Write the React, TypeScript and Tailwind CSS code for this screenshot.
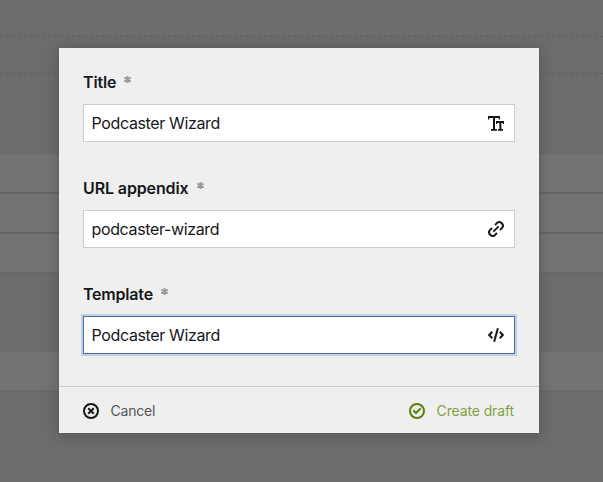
import type { ReactNode } from "react";

function TitleIcon() {
  return (
    <svg width="16" height="16" viewBox="0 0 16 16" fill="currentColor">
      <path d="M0 1H12V4.5H10.7V3H7V14H9V15.7H3V14H5V3H1.3V4.5H0Z" />
      <path d="M8 6H16V9H14.8V8H13.4V14H15V15.7H10V14H11.4V8H9.2V9H8Z" />
    </svg>
  );
}

function LinkIcon() {
  return (
    <svg width="16" height="16" viewBox="0 0 16 16" fill="none" stroke="currentColor" strokeWidth="2">
      <path d="M7 4 8.9 2.1A3.54 3.54 0 0 1 13.9 7.1L12 9" />
      <path d="M9 12 7.1 13.9A3.54 3.54 0 0 1 2.1 8.9L4 7" />
      <path d="M5.4 10.6 10.6 5.4" />
    </svg>
  );
}

function CodeIcon() {
  return (
    <svg width="16" height="16" viewBox="0 0 16 16" fill="none" stroke="currentColor" strokeWidth="2">
      <path d="M4.2 4.8 1.2 8 4.2 11.2M11.8 4.8 14.8 8 11.8 11.2M9.9 1.2 6.1 14.8" />
    </svg>
  );
}

function CancelIcon() {
  return (
    <svg width="16" height="16" viewBox="0 0 16 16" fill="none" stroke="currentColor" strokeWidth="2">
      <circle cx="8" cy="8" r="7" />
      <path d="M5.2 5.2 10.8 10.8M10.8 5.2 5.2 10.8" />
    </svg>
  );
}

function CheckIcon() {
  return (
    <svg width="16" height="16" viewBox="0 0 16 16" fill="none" stroke="currentColor" strokeWidth="2">
      <circle cx="8" cy="8" r="7" />
      <path d="M4.3 7.3 7 10 11.7 5.3" />
    </svg>
  );
}

function Asterisk() {
  return (
    <svg width="7" height="7" viewBox="0 0 7 7" fill="none" stroke="#999" strokeWidth="1.8" className="mt-1">
      <path d="M3.5 0V7M.3 1.6 6.7 5.4M6.7 1.6.3 5.4" />
    </svg>
  );
}

function Field({ label, value, icon, focused, tracking }: { label: string; value: string; icon: ReactNode; focused?: boolean; tracking: string }) {
  return (
    <div>
      <div className="flex h-8 items-start gap-2">
        <span className={`text-base leading-5 font-semibold ${tracking}`}>{label}</span>
        <Asterisk />
      </div>
      <div className={`flex h-[38px] items-center border bg-white pr-[10px] pl-[7.5px] ${focused ? "border-[#4271ae] shadow-[0_0_0_2px_rgba(66,113,174,0.25)]" : "border-[#ccc]"}`}>
        <span className="flex-1 text-base tracking-[-0.36px]">{value}</span>
        {icon}
      </div>
    </div>
  );
}

function DashedLine() {
  return <div className="h-px bg-[repeating-linear-gradient(90deg,#5e5e60_0_3px,transparent_3px_6px)]" />;
}

function Page() {
  return (
    <div className="flex h-full flex-col bg-[#6c6c6e] pt-9">
      <DashedLine />
      <div className="h-9" />
      <DashedLine />
      <div className="mt-20 flex flex-col gap-0.5 bg-[#656567]">
        <div className="h-[38px] bg-[#737375]" />
        <div className="h-[38px] bg-[#737375]" />
        <div className="h-[38px] bg-[#737375]" />
      </div>
      <div className="h-0.5 bg-[#68686a]" />
      <div className="mt-[78px] h-[38px] bg-[#737375]" />
      <div className="h-0.5 bg-[#68686a]" />
    </div>
  );
}

export default function App() {
  return (
    <div className="relative h-[482px] w-[603px] overflow-hidden font-['Inter',sans-serif] text-[#16171a]">
      <Page />
      <div className="absolute inset-0 flex pt-12 pl-[59px]">
        <div className="flex h-[385px] w-[480px] flex-col bg-[#efefef] shadow-[0_2px_12px_rgba(22,23,26,0.28)]">
          <div className="flex flex-1 flex-col gap-9 px-6 pt-6">
            <Field label="Title" value="Podcaster Wizard" icon={<TitleIcon />} tracking="tracking-[-0.15px]" />
            <Field label="URL appendix" value="podcaster-wizard" icon={<LinkIcon />} tracking="tracking-[-0.12px]" />
            <Field label="Template" value="Podcaster Wizard" icon={<CodeIcon />} focused tracking="tracking-[-0.2px]" />
          </div>
          <div className="flex h-[47px] items-center justify-between border-t border-[#ccc] pt-0.5 pr-[25px] pl-6 text-sm">
            <button className="flex items-center gap-[11.5px]">
              <CancelIcon />
              <span className="tracking-[-0.2px] text-[#55565a]">Cancel</span>
            </button>
            <button className="flex items-center gap-3 text-[#5d800d]">
              <CheckIcon />
              <span className="tracking-[-0.13px] text-[#84a144]">Create draft</span>
            </button>
          </div>
        </div>
      </div>
    </div>
  );
}
